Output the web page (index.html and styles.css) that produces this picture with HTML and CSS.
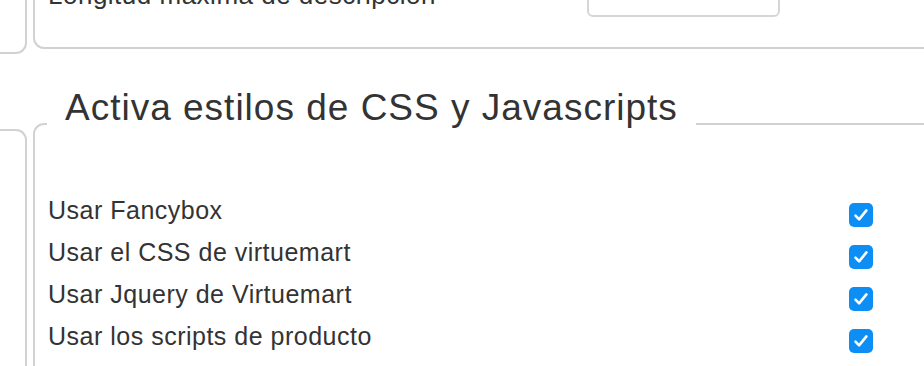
FILE: index.html
```html
<!DOCTYPE html>
<html lang="es">
<head>
  <meta charset="UTF-8">
  <title>Configuración</title>
  <link rel="stylesheet" href="styles.css">
</head>
<body>
  <div class="block block-top">
    <div class="side"></div>
    <div class="panel">
      <div class="field-row">
        <label class="field-label" for="desc-len">Longitud máxima de descripción</label>
        <input class="field-input" id="desc-len" type="text" value="">
      </div>
    </div>
  </div>

  <div class="block block-scripts">
    <div class="side"></div>
    <fieldset class="panel panel-set">
      <legend>Activa estilos de CSS y Javascripts</legend>
      <div class="opt-row">
        <span class="opt-label">Usar Fancybox</span>
        <span class="check"><svg viewBox="0 0 24 24"><path d="M6.5 12.6l3.6 3.8 7.3-9"/></svg></span>
      </div>
      <div class="opt-row">
        <span class="opt-label">Usar el CSS de virtuemart</span>
        <span class="check"><svg viewBox="0 0 24 24"><path d="M6.5 12.6l3.6 3.8 7.3-9"/></svg></span>
      </div>
      <div class="opt-row">
        <span class="opt-label">Usar Jquery de Virtuemart</span>
        <span class="check"><svg viewBox="0 0 24 24"><path d="M6.5 12.6l3.6 3.8 7.3-9"/></svg></span>
      </div>
      <div class="opt-row">
        <span class="opt-label">Usar los scripts de producto</span>
        <span class="check"><svg viewBox="0 0 24 24"><path d="M6.5 12.6l3.6 3.8 7.3-9"/></svg></span>
      </div>
    </fieldset>
  </div>
</body>
</html>
```

FILE: styles.css
```css
body {
  margin: 0;
  overflow: hidden;
  background: #fff;
  color: #333;
  font-family: "Liberation Sans", Helvetica, Arial, sans-serif;
}
.block {
  display: flex;
  gap: 6px;
  margin-left: -20px;
  margin-right: -40px;
}
.side {
  width: 45px;
  flex: none;
  border: 2px solid #d2d2d2;
  border-left: none;
}
.panel {
  flex: 1;
  border: 2px solid #d2d2d2;
  border-radius: 11px;
}

/* first (cut) block */
.block-top {
  margin-top: -31px;
}
.block-top .side {
  border-top: none;
  border-radius: 0 0 11px 0;
}
.block-top .panel {
  margin-bottom: 5px;
  padding: 12px 13px 30px;
  border-top-left-radius: 0;
}
.field-row {
  display: flex;
  align-items: center;
  height: 34px;
}
.field-label {
  width: 539px;
  margin-bottom: 10px;
  font-size: 26px;
  letter-spacing: 0.5px;
}
.field-input {
  width: 193px;
  height: 34px;
  box-sizing: border-box;
  border: 2px solid #d6d6d6;
  border-radius: 6px;
}

/* second block */
.block-scripts {
  margin-top: 32px;
}
.block-scripts .side {
  margin-top: 43px;
  border-bottom: none;
  border-radius: 0 11px 0 0;
}
.panel-set {
  margin: 0;
  padding: 27px 0 40px 13px;
  border-bottom: none;
  border-radius: 11px 0 0 0;
}
.panel-set legend {
  margin-left: -1px;
  padding: 0 18px 32px;
  font-size: 37px;
  line-height: 44px;
  letter-spacing: 1px;
}
.opt-row {
  display: grid;
  grid-template-columns: 801px 24px;
  align-items: center;
  height: 42px;
}
.opt-label {
  font-size: 25px;
  letter-spacing: 0.5px;
}
.check {
  width: 24px;
  height: 24px;
  margin-top: 10px;
  border-radius: 5px;
  background: #0d8ef5;
}
.check svg {
  display: block;
  width: 24px;
  height: 24px;
  fill: none;
  stroke: #fff;
  stroke-width: 2.6;
  stroke-linecap: round;
  stroke-linejoin: round;
}
```
